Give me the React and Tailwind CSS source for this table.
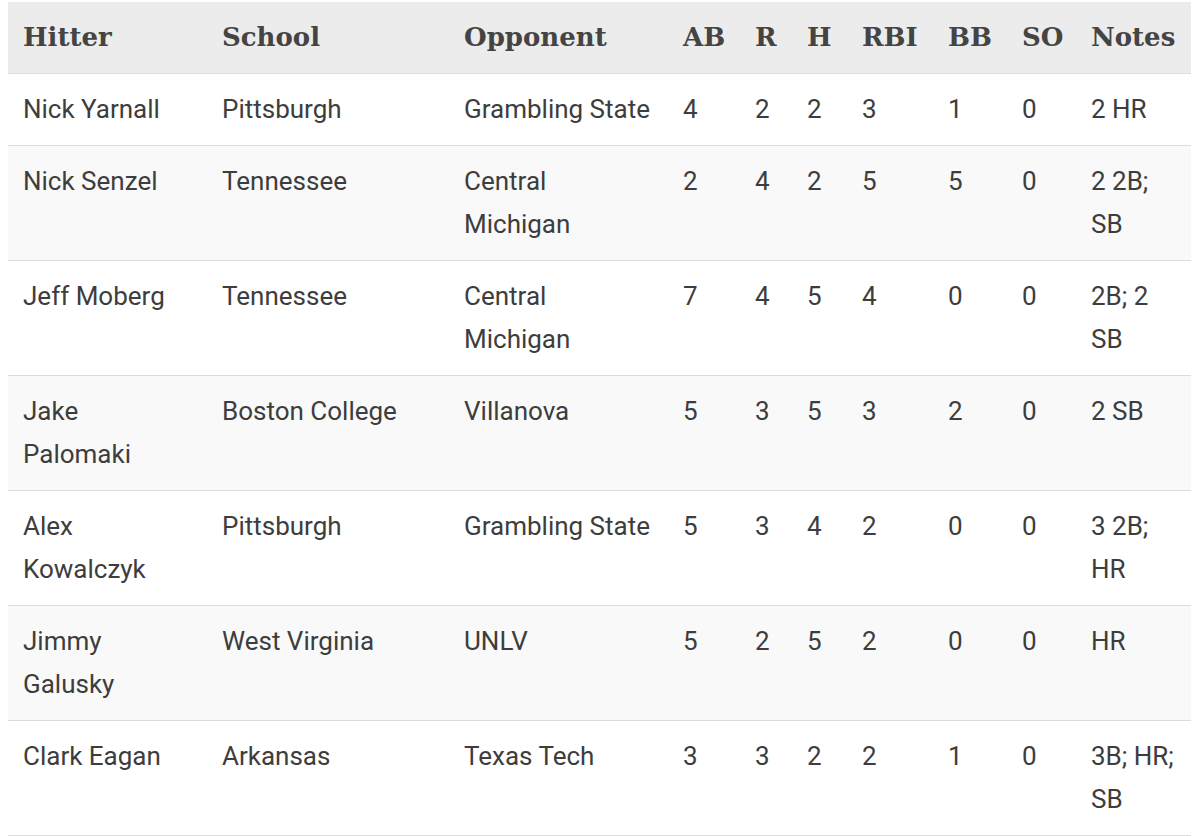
const cols = [
  { key: "hitter", label: "Hitter", w: "w-[199px]" },
  { key: "school", label: "School", w: "w-[242px]" },
  { key: "opp", label: "Opponent", w: "w-[219px]" },
  { key: "ab", label: "AB", w: "w-[72px]" },
  { key: "r", label: "R", w: "w-[52px]" },
  { key: "h", label: "H", w: "w-[55px]" },
  { key: "rbi", label: "RBI", w: "w-[86px]" },
  { key: "bb", label: "BB", w: "w-[74px]" },
  { key: "so", label: "SO", w: "w-[69px]" },
  { key: "notes", label: "Notes", w: "w-[115px]" },
];

const rows = [
  ["Nick Yarnall", "Pittsburgh", "Grambling State", 4, 2, 2, 3, 1, 0, "2 HR"],
  ["Nick Senzel", "Tennessee", "Central Michigan", 2, 4, 2, 5, 5, 0, "2 2B; SB"],
  ["Jeff Moberg", "Tennessee", "Central Michigan", 7, 4, 5, 4, 0, 0, "2B; 2 SB"],
  ["Jake Palomaki", "Boston College", "Villanova", 5, 3, 5, 3, 2, 0, "2 SB"],
  ["Alex Kowalczyk", "Pittsburgh", "Grambling State", 5, 3, 4, 2, 0, 0, "3 2B; HR"],
  ["Jimmy Galusky", "West Virginia", "UNLV", 5, 2, 5, 2, 0, 0, "HR"],
  ["Clark Eagan", "Arkansas", "Texas Tech", 3, 3, 2, 2, 1, 0, "3B; HR; SB"],
];

export default function App() {
  return (
    <div className="min-h-screen bg-white pt-[2px] pl-[8px]">
      <table className="table-fixed border-collapse w-[1183px] text-[#3d3d3d]">
        <colgroup>
          {cols.map((c) => (
            <col key={c.key} className={c.w} />
          ))}
        </colgroup>
        <thead>
          <tr className="bg-[#ececec] border-b border-[#dcdcdc]">
            {cols.map((c) => (
              <th
                key={c.key}
                className="text-left align-top px-[15px] py-[14px] leading-[43px] text-[26px] font-bold text-[#444] font-['DejaVu_Serif',serif]"
              >
                {c.label}
              </th>
            ))}
          </tr>
        </thead>
        <tbody className="font-['Roboto',sans-serif] text-[26px]">
          {rows.map((r, i) => (
            <tr
              key={r[0]}
              className={`border-b border-[#dcdcdc] ${i % 2 ? "bg-[#f9f9f9]" : "bg-white"}`}
            >
              {r.map((v, j) => (
                <td key={j} className="align-top px-[15px] py-[14px] leading-[43px]">
                  {v}
                </td>
              ))}
            </tr>
          ))}
        </tbody>
      </table>
    </div>
  );
}
